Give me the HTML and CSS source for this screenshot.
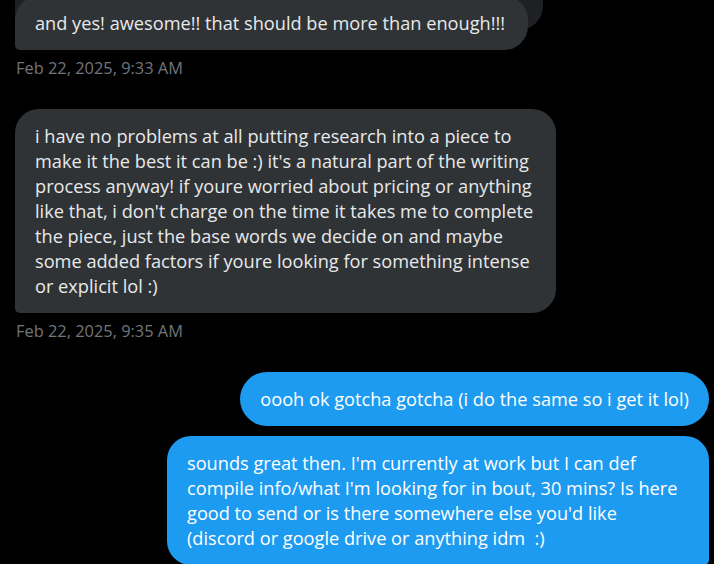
FILE: index.html
```html
<!DOCTYPE html>
<html lang="en">
<head>
<meta charset="utf-8">
<title>Messages</title>
<link rel="stylesheet" href="styles.css">
</head>
<body>
<main class="thread">
  <div class="group received first">
    <div class="reply-preview"></div>
    <div class="bubble single">and yes! awesome!! that should be more than enough!!!</div>
    <div class="time">Feb 22, 2025, 9:33 AM</div>
  </div>
  <div class="group received">
    <div class="bubble wide">i have no problems at all putting research into a piece to make it the best it can be :) it's a natural part of the writing process anyway! if youre worried about pricing or anything like that, i don't charge on the time it takes me to complete the piece, just the base words we decide on and maybe some added factors if youre looking for something intense or explicit lol :)</div>
    <div class="time">Feb 22, 2025, 9:35 AM</div>
  </div>
  <div class="group sent">
    <div class="bubble pill">oooh ok gotcha gotcha (i do the same so i get it lol)</div>
    <div class="bubble long">sounds great then. I'm currently at work but I can def compile info/what I'm looking for in bout, 30 mins? Is here good to send or is there somewhere else you'd like (discord or google drive or anything idm&nbsp; :)</div>
  </div>
</main>
</body>
</html>
```
FILE: styles.css
```css
html, body {
  margin: 0;
  background: #000;
  height: 100%;
  overflow: hidden;
}
body {
  font-family: "Open Sans", "Noto Sans", sans-serif;
  color: #e7e9ea;
}
.thread {
  display: flex;
  flex-direction: column;
  padding: 0 5px 0 15px;
  margin-top: -30px;
}
.group {
  display: flex;
  flex-direction: column;
}
.received { align-items: flex-start; }
.received + .received { margin-top: 31px; }
.sent { align-items: flex-end; gap: 10px; margin-top: 31px; }
.bubble {
  font-size: 18.2px;
  line-height: 25px;
  padding: 14.5px 20px;
  box-sizing: border-box;
  position: relative;
}
.received .bubble {
  background: #2f3336;
  border-radius: 24px 24px 24px 5px;
}
.reply-preview {
  width: 528px;
  height: 60px;
  background: #1e2023;
  border-radius: 0 0 24px 0;
  margin-bottom: -34px;
}
.received .single {
  width: 513px;
  white-space: nowrap;
}
.received .wide {
  width: 541px;
}
.time {
  font-size: 16.4px;
  color: #71767b;
  line-height: 20px;
  margin: 8px 0 0 1px;
}
.sent .bubble {
  background: #1d9bf0;
  color: #fff;
}
.sent .pill {
  border-radius: 27px;
}
.sent .long {
  width: 542px;
  border-radius: 24px 24px 5px 24px;
}
```
